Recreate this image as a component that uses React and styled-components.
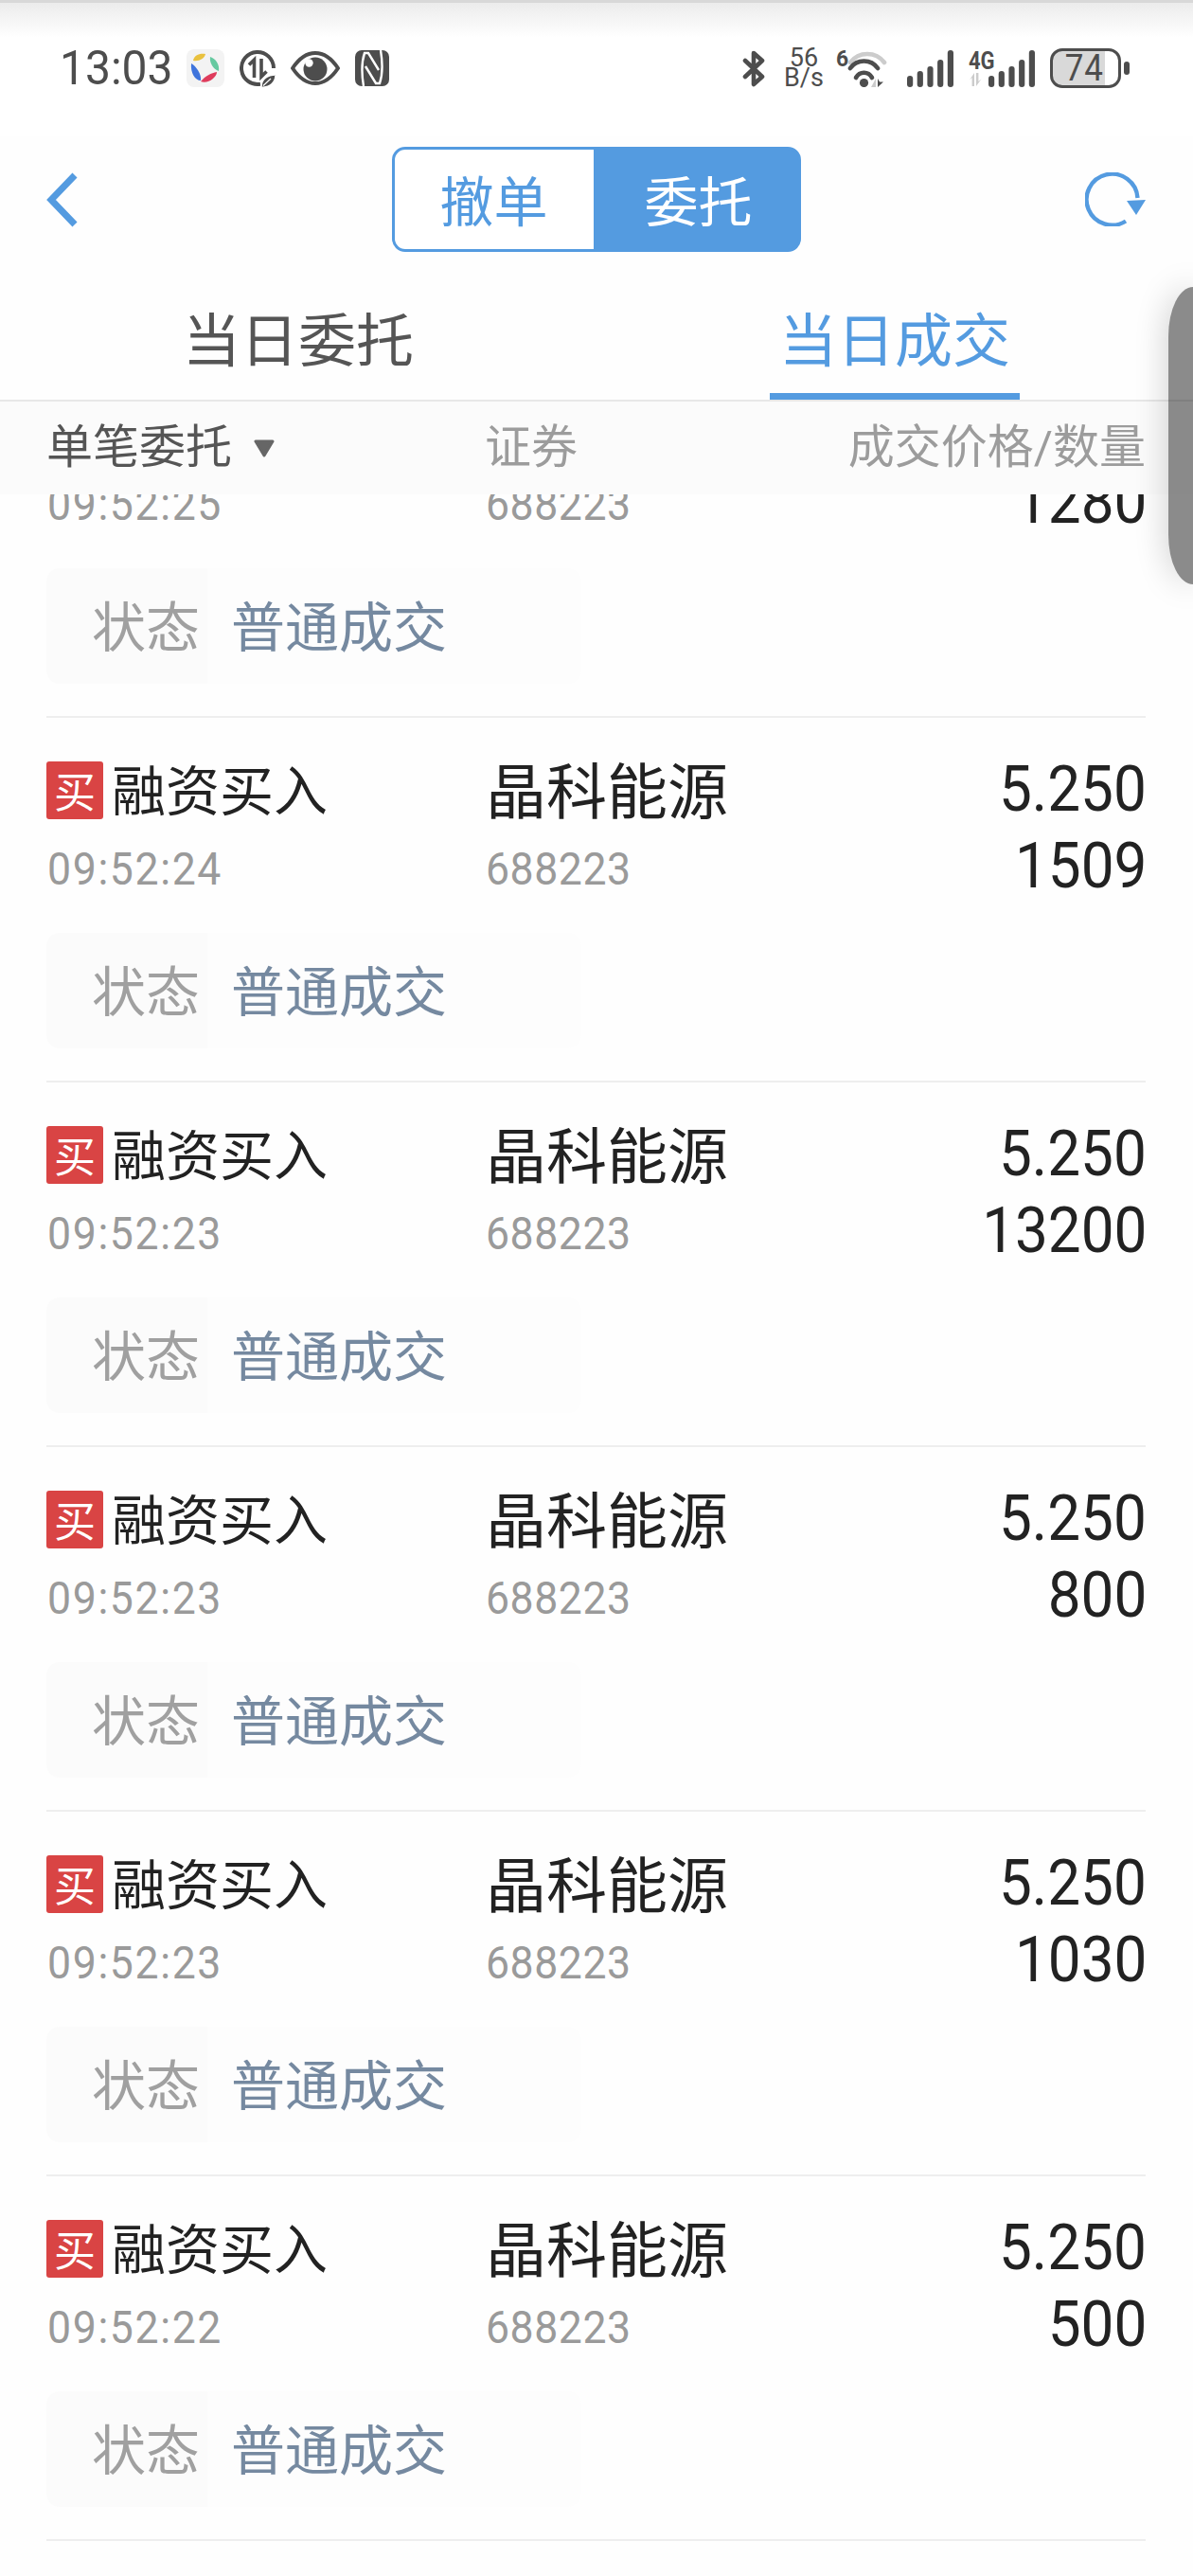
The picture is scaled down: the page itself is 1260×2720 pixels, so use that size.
import React from "react";
import styled, { createGlobalStyle } from "styled-components";

const GlobalStyle = createGlobalStyle`
  html, body {
    margin: 0;
    background: #fefefe;
  }
  * {
    box-sizing: border-box;
  }
`;

const FONT = `Roboto, "Noto Sans CJK SC", sans-serif`;
const BLUE = "#549be0";
const ICON_DARK = "#4d4d4d";

const Page = styled.div`
  position: relative;
  width: 1260px;
  height: 2720px;
  overflow: hidden;
  font-family: ${FONT};
  background: #fefefe;
`;

/* ---- status bar ---- */
const StatusBar = styled.div`
  display: flex;
  justify-content: space-between;
  align-items: center;
  height: 144px;
  padding: 0 67px 0 63px;
  color: ${ICON_DARK};
  background: linear-gradient(#d8d8d8 0 3px, #ececec 3px, #ffffff 40px);
`;

const StatusGroup = styled.div`
  display: flex;
  align-items: center;
  gap: ${(p) => p.$gap || 0}px;
`;

const Clock = styled.span`
  display: inline-block;
  width: 118px;
  font-size: 50px;
  line-height: 50px;
  white-space: nowrap;
  transform: scaleX(0.96);
  transform-origin: 0 50%;
`;

const SpeedText = styled.div`
  display: flex;
  flex-direction: column;
  align-items: center;
  width: 40px;
  font-size: 27px;
  line-height: 21px;

  span {
    display: block;
    height: 21px;
  }
`;

const StatusSpacer = styled.div`
  width: ${(p) => p.$w}px;
`;

const NetLabel = styled.div`
  display: flex;
  flex-direction: column;
  width: 21px;
  font-size: 25px;
  font-weight: 700;
  line-height: 24px;
  white-space: nowrap;

  span {
    display: inline-block;
    transform: scaleX(0.88);
    transform-origin: 0 50%;
  }
`;

const WifiBand = styled.span`
  align-self: flex-start;
  margin-top: 2px;
  width: 12px;
  font-size: 23px;
  font-weight: 700;
  line-height: 20px;
`;

const Battery = styled.div`
  display: flex;
  align-items: center;
  justify-content: center;
  width: 75px;
  height: 42px;
  border: 3.5px solid ${ICON_DARK};
  border-radius: 13px;
  background: linear-gradient(90deg, #d9d9d9 55px, #ffffff 55px);
  font-size: 38px;
  line-height: 36px;
  letter-spacing: 1px;

  span {
    display: inline-block;
    transform: scaleX(0.92);
    margin-right: 3px;
  }
`;

const BatteryNub = styled.div`
  width: 6px;
  height: 14px;
  margin-left: 3px;
  border-radius: 3px;
  background: ${ICON_DARK};
`;

const AppGlyph = () => (
  <svg width="40" height="40" viewBox="0 0 40 40">
    <rect width="40" height="40" rx="8" fill="#f3f3f3" />
    <path d="M7 12C8 6 14 4 20 5 19 10 13 13 7 12Z" fill="#e9c13e" />
    <path d="M25 8C31 10 35 16 34 23 28 21 24 14 25 8Z" fill="#66c9a0" />
    <path d="M5 15C10 18 16 26 15 33 9 33 4 25 5 15Z" fill="#3f74dc" />
    <path d="M15 34C20 28 26 25 32 24 32 30 22 37 15 34Z" fill="#df3c5c" />
  </svg>
);

const DataSaverGlyph = () => (
  <svg width="38" height="40" viewBox="0 0 38 40" fill="none" stroke={ICON_DARK}>
    <path d="M36 20A17 17 0 1 0 22 36.7" strokeWidth="4" />
    <path d="M15.5 30V11L10 16.5M23 10V29L28.5 23.5" strokeWidth="3.6" />
    <path d="M23 40C23 31 30 27 38 27 38 35 32 41 23 40Z" fill={ICON_DARK} stroke="#fff" strokeWidth="1.4" />
    <path d="M25 38.5L33 31" stroke="#fff" strokeWidth="1.2" />
  </svg>
);

const EyeGlyph = () => (
  <svg width="52" height="36" viewBox="0 0 52 36">
    <path
      d="M2 18C10 6 18 2 26 2 34 2 42 6 50 18 42 30 34 34 26 34 18 34 10 30 2 18Z"
      fill="none"
      stroke={ICON_DARK}
      strokeWidth="4"
      strokeLinejoin="round"
    />
    <circle cx="26" cy="19" r="12.5" fill={ICON_DARK} />
    <circle cx="19.5" cy="12.5" r="4.2" fill="#fff" />
  </svg>
);

const NfcGlyph = () => (
  <svg width="36" height="38" viewBox="0 0 36 38" fill="none">
    <rect width="36" height="38" rx="7" fill={ICON_DARK} />
    <path
      d="M9 38C7 26 7 12 10 3H14L25 21M27 0C29 12 29 26 26 35H22L11 17"
      stroke="#fff"
      strokeWidth="2.4"
    />
  </svg>
);

const BluetoothGlyph = () => (
  <svg width="25" height="39" viewBox="0 0 25 39" fill="none">
    <path
      d="M3 11L21 28 12 36V3L21 11 3 28"
      stroke={ICON_DARK}
      strokeWidth="4.6"
      strokeLinejoin="round"
      strokeLinecap="round"
    />
  </svg>
);

const WifiGlyph = () => (
  <svg width="42" height="39" viewBox="0 0 42 39" fill="none" strokeWidth="4.6" strokeLinecap="round">
    <path d="M3 13C12 1 30 1 39 13" stroke="#cccccc" />
    <path d="M3 19C10 9 25 9 32 19" stroke={ICON_DARK} />
    <path d="M9 29C13 22 22 22 26 29" stroke={ICON_DARK} />
    <circle cx="17.5" cy="34.5" r="4.6" fill={ICON_DARK} />
    <path d="M30 30V39H25Z" fill="#cccccc" />
    <path d="M32 30V39L38 33.5H34Z" fill={ICON_DARK} />
  </svg>
);

const SIGNAL_BARS = [12, 17, 22, 29, 39];

const SignalGlyph = () => (
  <svg width="49" height="39" viewBox="0 0 49 39">
    {SIGNAL_BARS.map((h, i) => (
      <rect key={i} x={i * 10.7} y={39 - h} width="6.2" height={h} rx="3" fill={ICON_DARK} />
    ))}
  </svg>
);

const CellArrows = () => (
  <svg width="14" height="14" viewBox="0 0 14 14">
    <path d="M6 0V14H3.6V5L1 7.4Z" fill="#cccccc" />
    <path d="M8 0H10.4V9L13.4 6.4 8 14Z" fill="#cccccc" />
  </svg>
);

/* ---- nav bar ---- */
const NavBar = styled.div`
  display: grid;
  grid-template-columns: 1fr auto 1fr;
  align-items: center;
  height: 133px;
  padding: 0 50px 0 49px;
`;

const Segments = styled.div`
  display: flex;
  height: 111px;
`;

const Segment = styled.div`
  display: flex;
  align-items: center;
  justify-content: center;
  width: 216px;
  padding-bottom: 4px;
  font-size: 57px;
  border: 3px solid ${BLUE};
  color: ${(p) => (p.$on ? "#ffffff" : BLUE)};
  background: ${(p) => (p.$on ? BLUE : "#ffffff")};
  border-radius: ${(p) => (p.$on ? "0 14px 14px 0" : "14px 0 0 14px")};
`;

const RefreshSlot = styled.div`
  justify-self: end;
  display: flex;
`;

/* ---- tabs ---- */
const TabBar = styled.div`
  display: flex;
  height: 147px;
  border-bottom: 2px solid #e8e8e8;
`;

const Tab = styled.div`
  flex: 1;
  display: flex;
  flex-direction: column;
  align-items: center;
  justify-content: space-between;
  padding-top: 44px;
  font-size: 61px;
  line-height: 80px;
  color: ${(p) => (p.$on ? BLUE : "#555555")};
`;

const TabMark = styled.div`
  width: 264px;
  height: 7px;
  background: ${(p) => (p.$on ? BLUE : "transparent")};
`;

/* ---- table ---- */
const Columns = styled.div`
  display: grid;
  grid-template-columns: ${(p) => p.$first}px 1fr auto;
`;

const TableHead = styled(Columns)`
  align-items: center;
  height: 98px;
  padding: 0 50px 0 49px;
  font-size: 49px;
  line-height: 60px;
  color: #9c9c9c;
  background: #fbfbfb;
`;

const SortHead = styled.div`
  display: flex;
  align-items: center;
  gap: 22px;
  color: #555555;
`;

const RowsClip = styled.div`
  height: 2198px;
  overflow: hidden;
`;

const Rows = styled.div`
  margin-top: -149px;
`;

const Row = styled.div`
  height: 385px;
  margin: 0 50px 0 49px;
  padding-top: 26px;
  border-bottom: 2px solid #eeeeee;
`;

const Cell = styled.div`
  display: flex;
  flex-direction: column;
  align-items: ${(p) => (p.$end ? "flex-end" : "flex-start")};
`;

const Line = styled.div`
  display: flex;
  align-items: center;
  height: ${(p) => p.$h}px;
  padding-left: ${(p) => p.$indent || 0}px;
`;

const SideBadge = styled.span`
  display: flex;
  align-items: center;
  justify-content: center;
  width: 60px;
  height: 61px;
  margin: 6px 9px 0 0;
  border-radius: 3px;
  background: #d94444;
  color: #ffffff;
  font-size: 44px;
`;

const OrderType = styled.span`
  font-size: 57px;
  color: #222222;
`;

const StockName = styled.span`
  font-size: 64px;
  color: #222222;
`;

const Muted = styled.span`
  display: inline-block;
  font-size: 49px;
  line-height: 49px;
  color: #9a9a9a;
  letter-spacing: ${(p) => p.$track}px;
  transform: scaleX(0.91);
  transform-origin: 0 50%;
`;

const Figure = styled.span`
  display: inline-block;
  margin-right: -1px;
  font-size: 66px;
  line-height: 62px;
  color: #222222;
  transform: translateY(${(p) => p.$dy}px) scaleX(0.94);
  transform-origin: 100% 50%;
`;

const StatusBox = styled.div`
  display: flex;
  align-items: center;
  width: 565px;
  height: 122px;
  margin-top: 28px;
  padding-bottom: 6px;
  border-radius: 14px;
  background: linear-gradient(90deg, #fbfbfb 170px, #fdfdfd 170px);
  font-size: 57px;
`;

const StatusLabel = styled.span`
  margin-left: 48px;
  margin-right: 33px;
  color: #a0a0a0;
`;

const StatusValue = styled.span`
  color: #7589a0;
`;

/* floating side handle pinned to the screen edge */
const EdgeHandle = styled.div`
  position: absolute;
  top: 303px;
  right: 0;
  width: 26px;
  height: 314px;
  border-radius: 26px 0 0 26px / 52px 0 0 52px;
  background: rgba(0, 0, 0, 0.45);
  box-shadow: 0 0 34px rgba(0, 0, 0, 0.22);
`;

const TRADES = [
  { time: "09:52:25", qty: "1280", scrolled: true },
  { time: "09:52:24", qty: "1509" },
  { time: "09:52:23", qty: "13200" },
  { time: "09:52:23", qty: "800" },
  { time: "09:52:23", qty: "1030" },
  { time: "09:52:22", qty: "500" },
];

// scrolled: the row's first line is already behind the table head, so it is left out
const TradeRow = ({ time, qty, scrolled }) => (
  <Row>
    <Columns $first={464}>
      <Cell>
        <Line $h={94}>
          {!scrolled && (
            <>
              <SideBadge>买</SideBadge>
              <OrderType>融资买入</OrderType>
            </>
          )}
        </Line>
        <Line $h={79} $indent={1}>
          <Muted $track={1.8}>{time}</Muted>
        </Line>
      </Cell>
      <Cell>
        <Line $h={94}>{!scrolled && <StockName>晶科能源</StockName>}</Line>
        <Line $h={79}>
          <Muted $track={0.6}>688223</Muted>
        </Line>
      </Cell>
      <Cell $end>
        <Line $h={94}>{!scrolled && <Figure $dy={3}>5.250</Figure>}</Line>
        <Line $h={79}>
          <Figure $dy={-3}>{qty}</Figure>
        </Line>
      </Cell>
    </Columns>
    <StatusBox>
      <StatusLabel>状态</StatusLabel>
      <StatusValue>普通成交</StatusValue>
    </StatusBox>
  </Row>
);

const App = () => {
  return (
    <Page>
      <GlobalStyle />
      <StatusBar>
        <StatusGroup $gap={16}>
          <Clock>13:03</Clock>
          <AppGlyph />
          <DataSaverGlyph />
          <EyeGlyph />
          <NfcGlyph />
        </StatusGroup>
        <StatusGroup>
          <BluetoothGlyph />
          <StatusSpacer $w={20} />
          <SpeedText>
            <span>56</span>
            <span>B/s</span>
          </SpeedText>
          <StatusSpacer $w={14} />
          <WifiBand>6</WifiBand>
          <WifiGlyph />
          <StatusSpacer $w={21} />
          <SignalGlyph />
          <StatusSpacer $w={16} />
          <NetLabel>
            <span>4G</span>
            <CellArrows />
          </NetLabel>
          <SignalGlyph />
          <StatusSpacer $w={16} />
          <Battery>
            <span>74</span>
          </Battery>
          <BatteryNub />
        </StatusGroup>
      </StatusBar>

      <NavBar>
        <svg width="33" height="58" viewBox="0 0 33 58" fill="none">
          <path d="M30 3L5 29 30 55" stroke={BLUE} strokeWidth="7" />
        </svg>
        <Segments>
          <Segment>撤单</Segment>
          <Segment $on>委托</Segment>
        </Segments>
        <RefreshSlot>
          <svg width="64" height="57" viewBox="0 0 64 57" fill="none">
            <path d="M55.5 27A27 27 0 1 0 43 51.5" stroke={BLUE} strokeWidth="4.4" />
            <path d="M44 30L64 29 54 45Z" fill={BLUE} />
          </svg>
        </RefreshSlot>
      </NavBar>

      <TabBar>
        <Tab>
          当日委托
          <TabMark />
        </Tab>
        <Tab $on>
          当日成交
          <TabMark $on />
        </Tab>
      </TabBar>

      <TableHead $first={463}>
        <SortHead>
          单笔委托
          <svg width="24" height="19" viewBox="0 0 24 19">
            <path d="M3 2H21L12 17Z" fill="#666666" stroke="#666666" strokeWidth="3" strokeLinejoin="round" />
          </svg>
        </SortHead>
        <span>证券</span>
        <span>成交价格/数量</span>
      </TableHead>

      <RowsClip>
        <Rows>
          {TRADES.map((t, i) => (
            <TradeRow key={i} time={t.time} qty={t.qty} scrolled={t.scrolled} />
          ))}
        </Rows>
      </RowsClip>

      <EdgeHandle />
    </Page>
  );
};

export default App;
